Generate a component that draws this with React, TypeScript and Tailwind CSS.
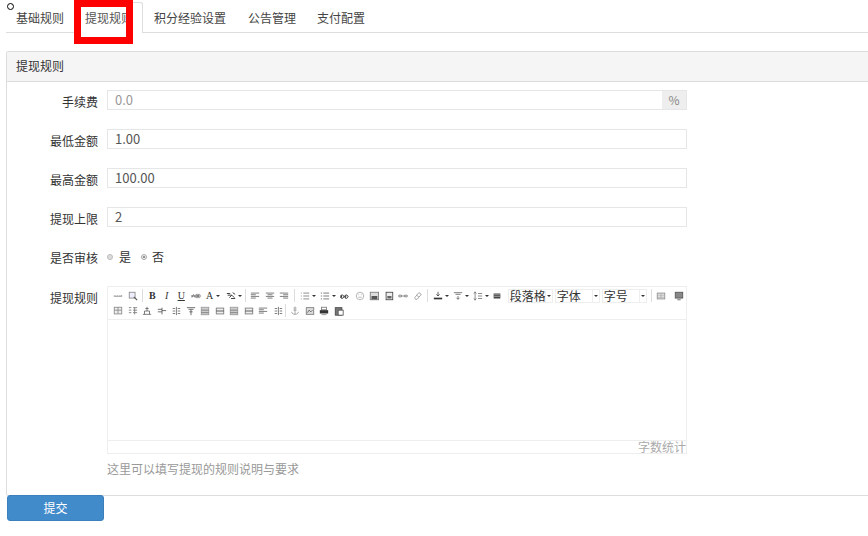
const P = ({ d, c = "#666", w = 1 }: { d: string; c?: string; w?: number }) => (
  <path d={d} stroke={c} strokeWidth={w} fill="none" />
);

const icons: Record<string, React.ReactNode> = {
  html: <P d="M1 5.5h1M3 5.5h1M5 5.5h1M7 5.5h1M9 5.5h2M1 6.5h10" c="#999" />,
  search: <><rect x="1.5" y="1.5" width="7" height="7" fill="#eef" stroke="#888" /><P d="M7 7l4 4" c="#555" w={1.4} /></>,
  strike: <><P d="M1 8l2-4 2 4M6 4h2v4H6zM11 4H9v4h2" c="#888" /><P d="M0 6h12" c="#555" /></>,
  paint: <P d="M1 3h4M2 5h5l3 3M4 8l3-3M6 9h5M8 2l3 2" c="#444" w={1.2} />,
  left: <P d="M1 2.5h10M1 4.5h6M1 6.5h10M1 8.5h6" c="#666" />,
  center: <P d="M1 2.5h10M3 4.5h6M1 6.5h10M3 8.5h6" c="#666" />,
  right: <P d="M1 2.5h10M5 4.5h6M1 6.5h10M5 8.5h6" c="#666" />,
  ul: <P d="M1 2.5h1M4 2.5h7M1 6h1M4 6h7M1 9.5h1M4 9.5h7" c="#777" />,
  ol: <P d="M1 2.5h1.5M4 2.5h7M1 6h1.5M4 6h7M1 9.5h1.5M4 9.5h7" c="#666" />,
  quote: <P d="M1.5 5a2 2 0 1 0 2 0M1.5 8l1-4M6.5 5a2 2 0 1 0 2 0M6.5 8l1-4" c="#333" w={1.2} />,
  smile: <><circle cx="6" cy="6" r="4.5" fill="none" stroke="#aaa" /><P d="M4 4.5h1M7 4.5h1M4 7.5h4" c="#aaa" /></>,
  image: <><rect x="1.5" y="1.5" width="10" height="9" fill="#ddd" stroke="#777" /><rect x="3" y="6" width="7" height="4" fill="#555" /></>,
  doc: <><rect x="2.5" y="1.5" width="8" height="9" fill="#eee" stroke="#444" /><rect x="4" y="6" width="5" height="3" fill="#666" /></>,
  link: <P d="M1 5h3v2H1zM8 5h3v2H8zM4 6h4" c="#777" />,
  eraser: <P d="M2 8l5-6 3 2-5 6H3zM4 5l3 2" c="#999" />,
  color: <><P d="M6 1v5M4 4l2 2 2-2" c="#444" /><rect x="1" y="8" width="10" height="2" fill="#333" /></>,
  para: <P d="M1 2h10M3 4h6M6 6v4M4 8l2 2 2-2" c="#666" />,
  line: <P d="M2.5 1v10M1 3l1.5-2L4 3M1 9l1.5 2L4 9M6 3h5M6 6h5M6 9h5" c="#777" />,
  block: <><rect x="2" y="3" width="8" height="6" fill="#444" /><P d="M2 4.5h8M2 6.5h8" c="#aaa" /></>,
  table: <><rect x="1.5" y="2.5" width="9" height="7" fill="#eee" stroke="#888" /><P d="M1.5 5h9M1.5 7.5h9M6 2.5v7" c="#aaa" /></>,
  screen: <><rect x="1.5" y="1.5" width="9" height="7" fill="#888" stroke="#555" /><P d="M4 10.5h4" c="#555" /></>,
  t1: <><rect x="1.5" y="1.5" width="9" height="8" fill="#eee" stroke="#888" /><P d="M1.5 5h9M6 1.5v8" c="#888" /></>,
  t2: <P d="M1 2h3M1 5h3M1 8h3M6 2h5M6 5h5M6 8h5M8 2v8" c="#777" />,
  t3: <><P d="M1 10h10M3 10V6h6v4M6 1v5M4 3h4" c="#666" /></>,
  t4: <P d="M1 4h5M1 7h5M6 2v8M6 5.500h5" c="#555" />,
  t5: <P d="M2 3h3M2 6h3M2 9h3M6.500 1v10M8 3h3M8 6h3M8 9h3" c="#666" />,
  t6: <P d="M1 2h10M3 4h6M6 4v7M4 7h4" c="#555" />,
  t7: <><rect x="1.5" y="1.5" width="9" height="9" fill="#ccc" stroke="#999" /><P d="M1.5 5h9M1.5 8h9" c="#777" /></>,
  t8: <><rect x="1.500" y="2.500" width="9" height="7" fill="#eee" stroke="#777" /><P d="M1.5 6h9" c="#444" /></>,
  anchor: <><circle cx="6" cy="2.500" r="1.200" fill="none" stroke="#999" /><P d="M6 4v6M2 7c0 2 2 3 4 3s4-1 4-3M4 5h4" c="#999" /></>,
  pic: <><rect x="1.500" y="2" width="9" height="8" fill="#ddd" stroke="#777" /><P d="M3 8l2-3 2 2 2-2" c="#555" /></>,
  print: <><rect x="3" y="1.500" width="6" height="3" fill="#fff" stroke="#777" /><rect x="1" y="5" width="10" height="4" fill="#333" /><rect x="3" y="9" width="6" height="2" fill="#aaa" /></>,
  paste: <><rect x="1.500" y="2" width="8" height="9" fill="#777" stroke="#444" /><rect x="5" y="5" width="6" height="6" fill="#fff" stroke="#555" /></>,
};

const Icon = ({ n, caret }: { n: string; caret?: boolean }) => (
  <span className={caret ? "flex h-4 w-[20px] shrink-0 items-center gap-[2px] pl-[3px]" : "flex h-4 w-[14.5px] shrink-0 items-center justify-center"}>
    <svg width="10" height="10" viewBox="0 0 12 12" className="shrink-0">{icons[n]}</svg>
    {caret && <span className="h-0 w-0 border-x-[2px] border-t-[2px] border-x-transparent border-t-[#333]" />}
  </span>
);

const Letter = ({ t, cls, caret }: { t: string; cls?: string; caret?: boolean }) => (
  <span className={`flex h-4 shrink-0 items-center justify-center gap-[3px] font-['Liberation_Serif',serif] text-[10px] text-[#333] ${caret ? "w-[20px]" : "w-[14.5px]"} ${cls ?? ""}`}>
    {t}
    {caret && <span className="h-0 w-0 border-x-[2px] border-t-[2px] border-x-transparent border-t-[#333]" />}
  </span>
);

const Sep = () => <span className="mx-[2px] h-[13px] w-px shrink-0 bg-[#ddd]" />;

const Combo = ({ t, w, clip }: { t: string; w: string; clip?: boolean }) => (
  <span className={`mr-[2px] flex h-[14px] shrink-0 items-center border border-[#eee] text-[12px] leading-[12px] text-[#333] ${w}`}>
    <span className={`min-w-0 flex-1 whitespace-nowrap pl-[1px] leading-[12px] ${clip ? "overflow-x-clip" : ""}`}>{t}</span>
    <span className="flex h-full w-[7px] shrink-0 items-center justify-center border-l border-[#eee]">
      <span className="h-0 w-0 border-x-[2px] border-t-[2px] border-x-transparent border-t-[#333]" />
    </span>
  </span>
);

const Field = ({ label, children, cls }: { label: string; children: React.ReactNode; cls: string }) => (
  <div className={`flex ${cls}`}>
    <label className="h-5 w-[91px] shrink-0 text-right text-[12px] leading-[24px] text-[#333]">{label}</label>
    <div className="ml-[9px] w-[580px]">{children}</div>
  </div>
);

const Input = ({ v }: { v: string }) => (
  <div className="h-5 border border-[#e5e6e7] pl-[7px] text-[13px] leading-[18px] text-[#555]">{v}</div>
);

export default function App() {
  return (
    <div className="relative h-[536px] w-[868px] overflow-hidden bg-white font-['Noto_Sans_CJK_SC','Liberation_Sans',sans-serif]">
      <span className="absolute left-[7px] top-[3px] h-[7px] w-[7px] rounded-full border border-black bg-white" />
      <span className="absolute left-[74px] top-0 h-[44px] w-[59px] border-[7px] border-[#f00]" />

      <div className="ml-[6px] flex h-[33px] border-b border-[#ddd] pt-[2px] text-[12px] text-[#444]">
        <span className="w-[68px] pl-[10px] pt-[7px] leading-[17px]">基础规则</span>
        <span className="h-[31px] w-[69px] rounded-t-[3px] border-x border-t border-[#ddd] bg-white pl-[10px] pt-[6px] leading-[17px] text-[#555]">提现规则</span>
        <span className="ml-[11px] pt-[7px] leading-[17px]">积分经验设置</span>
        <span className="ml-[22px] pt-[7px] leading-[17px]">公告管理</span>
        <span className="ml-[21px] pt-[7px] leading-[17px]">支付配置</span>
      </div>

      <div className="ml-[6px] mt-[18px] h-[445px] w-[880px] rounded-[2px] border border-[#ddd]">
        <div className="h-[30px] border-b border-[#ddd] bg-[#f5f5f5] pl-[9px] text-[12px] leading-[28px] text-[#333]">提现规则</div>

        <div className="pt-[8px]">
          <Field label="手续费" cls="">
            <div className="flex h-5 border border-[#e5e6e7] bg-white text-[13px] leading-[18px]">
              <div className="flex-1 pl-[7px] text-[#999]">0.0</div>
              <div className="w-[24px] bg-[#eee] text-center text-[12px] text-[#888]">%</div>
            </div>
          </Field>
          <Field label="最低金额" cls="mt-[19px]"><Input v="1.00" /></Field>
          <Field label="最高金额" cls="mt-[19px]"><Input v="100.00" /></Field>
          <Field label="提现上限" cls="mt-[19px]"><Input v="2" /></Field>
          <Field label="是否审核" cls="mt-[19px]">
            <div className="flex h-5 items-center pt-px text-[12px] text-[#333]">
              <span className="h-[6px] w-[6px] rounded-full border border-[#bbb] bg-[#ddd]" />
              <span className="ml-[6px]">是</span>
              <span className="ml-[10px] flex h-[6px] w-[6px] items-center justify-center rounded-full border border-[#aaa] bg-[#eee]">
                <span className="h-[2px] w-[2px] rounded-full bg-[#777]" />
              </span>
              <span className="ml-[5px]">否</span>
            </div>
          </Field>
          <Field label="提现规则" cls="mt-[20px]">
            <div className="h-[168px] border border-[#eee] bg-white">
              <div className="h-[33px] border-b border-[#eee] pl-[3px] pt-[1px]">
                <div className="flex h-[15px] items-center">
                  <Icon n="html" /><Icon n="search" /><Sep />
                  <Letter t="B" cls="font-bold" /><Letter t="I" cls="italic" /><Letter t="U" cls="underline" /><Icon n="strike" />
                  <Letter t="A" caret /><Icon n="paint" caret /><Sep />
                  <Icon n="left" /><Icon n="center" /><Icon n="right" /><Sep />
                  <Icon n="ul" caret /><Icon n="ol" caret /><span className="w-[2px]" /><Icon n="quote" /><Icon n="smile" /><Icon n="image" /><Icon n="doc" /><Icon n="link" /><Icon n="eraser" /><Sep />
                  <Icon n="color" caret /><Icon n="para" caret /><Icon n="line" caret /><Icon n="block" />
                  <Combo t="段落格式" w="ml-[3px] w-[45px]" clip /><Combo t="字体" w="w-[45px]" /><Combo t="字号" w="w-[45px]" /><Sep />
                  <Icon n="table" /><span className="w-[4px]" /><Icon n="screen" />
                </div>
                <div className="flex h-[15px] items-center">
                  <Icon n="t1" /><Icon n="t2" /><Icon n="t3" /><Icon n="t4" /><Icon n="t5" /><Icon n="t6" /><Icon n="t7" /><Icon n="t8" /><Icon n="t7" /><Icon n="t8" /><Icon n="left" /><Icon n="t5" />
                  <span className="mr-[2px] h-[13px] w-px shrink-0 bg-[#ddd]" />
                  <Icon n="anchor" /><Icon n="pic" /><Icon n="print" /><Icon n="paste" />
                </div>
              </div>
              <div className="h-[120px]" />
              <div className="h-[13px] border-t border-[#eee] text-right text-[12px] leading-[12px] text-[#aaa]">字数统计</div>
            </div>
            <p className="mt-[6px] text-[12px] leading-[17px] text-[#999]">这里可以填写提现的规则说明与要求</p>
          </Field>
        </div>
      </div>

      <button className="-mt-px ml-[7px] block h-[26px] w-[97px] rounded-[3px] border border-[#3b7fbd] bg-[#428bca] text-[12px] text-white">提交</button>
    </div>
  );
}
